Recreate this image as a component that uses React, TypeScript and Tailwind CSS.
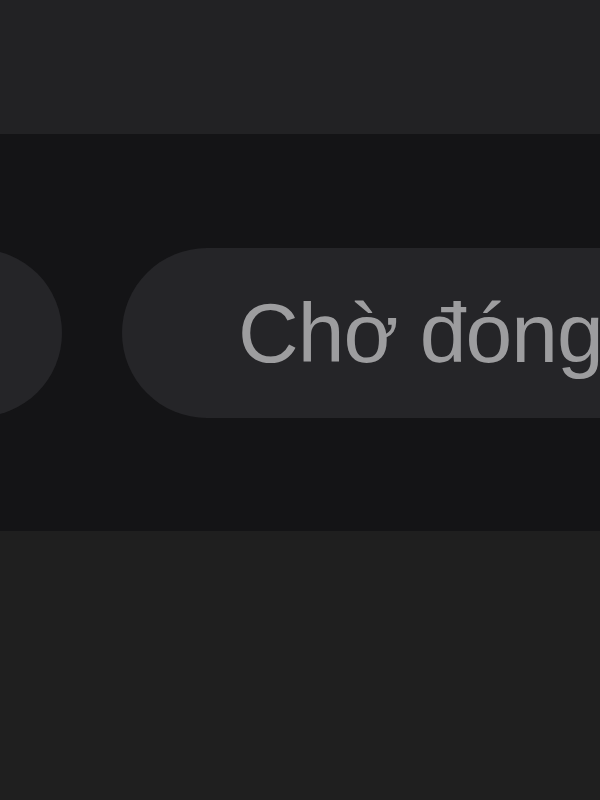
export default function App() {
  return (
    <div
      className="w-[600px] h-[800px] overflow-hidden flex flex-col bg-[#1f1f1f]"
      style={{ fontFamily: '"Liberation Sans", Arial, sans-serif' }}
    >
      {/* top bar */}
      <div className="h-[134px] shrink-0 bg-[#222224]" />

      {/* filter row */}
      <div className="h-[397px] shrink-0 bg-[#141416] flex items-center overflow-hidden">
        <div className="flex items-center gap-[60px] -ml-[108px]">
          <div className="w-[170px] h-[168px] shrink-0 rounded-full bg-[#252528]" />
          <div className="h-[170px] w-[700px] shrink-0 rounded-full bg-[#252528] flex items-center pl-[116px]">
            <span className="text-[84px] leading-none text-[#9d9d9f] whitespace-nowrap tracking-[-1px]">
              Chờ đóng gói
            </span>
          </div>
        </div>
      </div>

      {/* content */}
      <div className="flex-1 bg-[#1f1f1f]" />
    </div>
  );
}
